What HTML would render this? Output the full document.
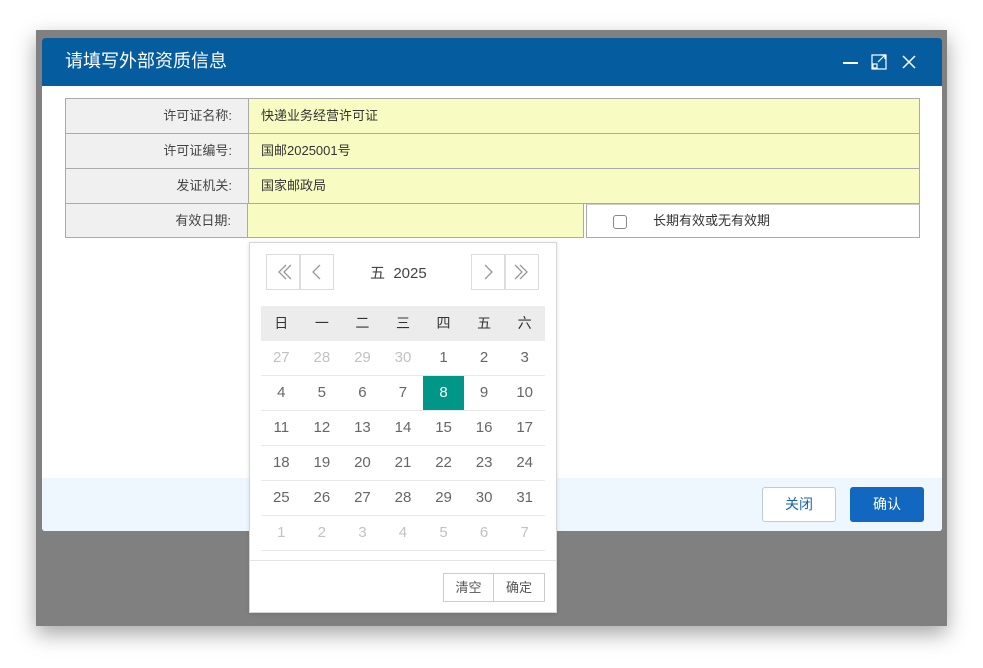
<!DOCTYPE html>
<html><head><meta charset="utf-8"><style>
*{box-sizing:border-box;margin:0;padding:0}
body{width:983px;height:668px;background:#fff;position:relative;overflow:hidden;font-family:"Liberation Sans","Noto Sans CJK SC",sans-serif;color:#333}
.outer{position:absolute;left:36px;top:30px;width:911px;height:596px;background:#808080;box-shadow:0 8px 20px rgba(0,0,0,.35)}
.dlg{position:absolute;left:42px;top:38px;width:900px;height:493px;background:#fff;border-radius:3px;overflow:hidden}
.hd{height:48px;background:#055c9e;color:#fff;font-size:18px;line-height:46px;padding-left:23px}
.ft{position:absolute;left:0;top:440px;width:900px;height:53px;background:#eef6fe}
.btn{position:absolute;top:9px;height:35px;width:74px;border-radius:3px;font-size:14px;text-align:center;line-height:35px}
.tbl{position:absolute;left:65px;top:98px;width:855px;font-size:13px}
.r{display:flex;height:35px;border:1px solid #aaa;border-bottom:none}
.r div{line-height:34px}
.l{width:183px;background:#f0f0f0;text-align:right;padding-right:16px;border-right:1px solid #aaa;color:#444}
.v{flex:1;background:#f8fcc2;padding-left:12px}
.cal{position:absolute;left:249px;top:242px;width:308px;height:371px;background:#fff;border:1px solid #d6d6d6;box-shadow:0 1px 4px rgba(0,0,0,.12)}
.nb{position:absolute;top:11px;width:34px;height:36px;border:1px solid #ddd}
.grid{position:absolute;left:11px;top:63px;width:284px;font-size:15px;color:#666}
.row{display:flex;height:35px;border-bottom:1px solid #e8e8e8}
.row div{width:40.57px;text-align:center;line-height:34px}
.wk{background:#ececec;border:none;font-size:14px;color:#333}
.g{color:#c2c2c2}
.sel{background:#009688;color:#fff}
</style></head><body>
<div class="outer"></div>
<div class="dlg">
<div class="hd">请填写外部资质信息
<svg style="position:absolute;left:800px;top:14px" width="80" height="20" viewBox="0 0 80 20"><path d="M1 11H16" stroke="#fff" stroke-width="2"/><rect x="30" y="3" width="14" height="14" fill="none" stroke="#fff" stroke-width="1.2"/><path d="M36 10L43 3M39 3H43V7" stroke="#fff" stroke-width="1.2" fill="none"/><rect x="31" y="12" width="4" height="4" fill="none" stroke="#fff" stroke-width="1.2"/><path d="M61 4L73 16M73 4L61 16" stroke="#fff" stroke-width="1.5"/></svg></div>
<div class="ft"><div class="btn" style="left:720px;border:1px solid #bcd;background:#fff;color:#1565b0;line-height:33px">关闭</div><div class="btn" style="left:808px;background:#1267c0;color:#fff">确认</div></div>
</div>
<div class="tbl">
<div class="r"><div class="l">许可证名称:</div><div class="v">快递业务经营许可证</div></div>
<div class="r"><div class="l">许可证编号:</div><div class="v">国邮2025001号</div></div>
<div class="r"><div class="l">发证机关:</div><div class="v">国家邮政局</div></div>
<div class="r" style="border:none;height:35px;border-top:1px solid #aaa">
<div class="l" style="border:1px solid #aaa;border-top:none;height:34px">有效日期:</div>
<div style="width:336px;background:#f8fcc2;border:1px solid #aaa;border-left:none;border-top:none;height:34px"></div>
<div style="width:2px"></div>
<div style="flex:1;background:#fff;border:1px solid #aaa;border-top:1px solid #ccc;height:34px;margin-top:0;position:relative;padding-left:66px;line-height:32px"><span style="position:absolute;left:26px;top:10px;width:14px;height:14px;border:1px solid #888;border-radius:3px"></span>长期有效或无有效期</div>
</div>
</div>
<div class="cal">
<div class="nb" style="left:16px"><svg width="32" height="34"><path d="M19 10L12 17L19 24M24 10L17 17L24 24" stroke="#999" fill="none" stroke-width="1.3"/></svg></div>
<div class="nb" style="left:50px"><svg width="32" height="34"><path d="M19 10L12 17L19 24" stroke="#999" fill="none" stroke-width="1.3"/></svg></div>
<div style="position:absolute;left:120px;top:19px;font-size:15px;color:#444">五&nbsp;&nbsp;2025</div>
<div class="nb" style="left:221px"><svg width="32" height="34"><path d="M13 10L20 17L13 24" stroke="#999" fill="none" stroke-width="1.3"/></svg></div>
<div class="nb" style="left:255px"><svg width="32" height="34"><path d="M9 10L16 17L9 24M14 10L21 17L14 24" stroke="#999" fill="none" stroke-width="1.3"/></svg></div>
<div class="grid">
<div class="row wk"><div>日</div><div>一</div><div>二</div><div>三</div><div>四</div><div>五</div><div>六</div></div>
<div class="row"><div class="g">27</div><div class="g">28</div><div class="g">29</div><div class="g">30</div><div>1</div><div>2</div><div>3</div></div>
<div class="row"><div>4</div><div>5</div><div>6</div><div>7</div><div class="sel">8</div><div>9</div><div>10</div></div>
<div class="row"><div>11</div><div>12</div><div>13</div><div>14</div><div>15</div><div>16</div><div>17</div></div>
<div class="row"><div>18</div><div>19</div><div>20</div><div>21</div><div>22</div><div>23</div><div>24</div></div>
<div class="row"><div>25</div><div>26</div><div>27</div><div>28</div><div>29</div><div>30</div><div>31</div></div>
<div class="row"><div class="g">1</div><div class="g">2</div><div class="g">3</div><div class="g">4</div><div class="g">5</div><div class="g">6</div><div class="g">7</div></div>
</div>
<div style="position:absolute;left:0;top:317px;width:306px;border-top:1px solid #e4e4e4"></div>
<div style="position:absolute;left:193px;top:330px;width:102px;height:29px;border:1px solid #ccc;font-size:13px;display:flex;color:#555"><div style="width:50px;text-align:center;line-height:27px;border-right:1px solid #ccc">清空</div><div style="flex:1;text-align:center;line-height:27px">确定</div></div>
</div>
</body></html>
